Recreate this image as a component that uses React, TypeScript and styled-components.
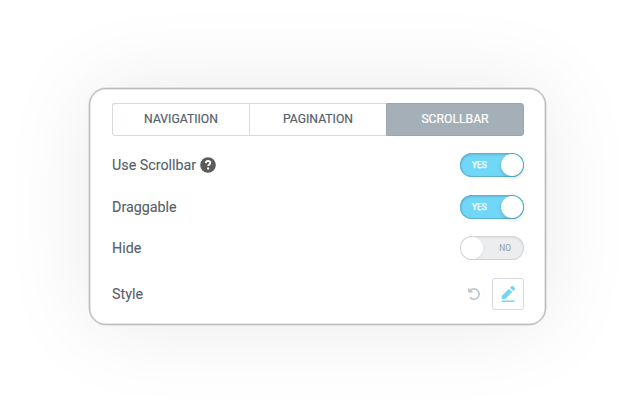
import React from "react";
import styled, { createGlobalStyle } from "styled-components";

const GlobalStyle = createGlobalStyle`
  * { box-sizing: border-box; }
  body { margin: 0; background: #fff; overflow: hidden; }
  button { font: inherit; margin: 0; padding: 0; }
`;

const Page = styled.main`
  height: 413px;
  padding: 88px 88px 0 89px;
  font-family: Roboto, "Liberation Sans", sans-serif;
  color: #556068;
`;

const Card = styled.section`
  width: 457px;
  height: 237px;
  padding: 14px 21px 0 22px;
  border: 1px solid #bcbcbc;
  border-radius: 17px;
  background: #fff;
  box-shadow: inset 0 0 0 0.5px #d0d0d0, 0 0 0 0.5px #d0d0d0, 0 0 90px rgba(0, 0, 0, 0.085);
`;

const Tabs = styled.div`
  display: grid;
  grid-template-columns: 137px 137px 138px;
  height: 33px;
  margin-bottom: 8px;
`;

const Tab = styled.button<{ $active?: boolean }>`
  border: 1px solid ${(p) => (p.$active ? "#9ba7b0" : "#d5dae2")};
  border-right-width: ${(p) => (p.$active ? "1px" : "0")};
  padding-bottom: 1px;
  background: ${(p) => (p.$active ? "#a4afb7" : "#fff")};
  color: ${(p) => (p.$active ? "#fff" : "#556068")};
  font-size: 12.2px;
  font-weight: 400;
  -webkit-text-stroke: 0.2px currentColor;
  line-height: 30px;
  &:first-child { border-radius: 3px 0 0 3px; }
  &:last-child { border-radius: 0 3px 3px 0; }
`;

const Row = styled.div<{ $height: number }>`
  display: flex;
  align-items: center;
  justify-content: space-between;
  width: 412px;
  height: ${(p) => p.$height}px;
`;

const Label = styled.span`
  display: flex;
  align-items: center;
  gap: 4px;
  font-size: 14.3px;
  line-height: 20px;
  -webkit-text-stroke: 0.1px currentColor;
`;

const Help = styled.svg`
  width: 16px;
  height: 16px;
`;

const Track = styled.button<{ $on: boolean }>`
  display: flex;
  flex-direction: ${(p) => (p.$on ? "row" : "row-reverse")};
  align-items: center;
  justify-content: space-between;
  width: 64px;
  height: 24px;
  padding: 1px;
  padding-left: ${(p) => (p.$on ? "12px" : "1px")};
  padding-right: ${(p) => (p.$on ? "1px" : "13px")};
  border: 0;
  border-radius: 12px;
  background: ${(p) => (p.$on ? "#71d7f7" : "#ebedee")};
  box-shadow: inset 0 0 0 1px ${(p) => (p.$on ? "#58b4d0" : "#d3d4d5")},
    inset 0 1px 3px rgba(0, 0, 0, ${(p) => (p.$on ? 0.25 : 0.12)});
  color: ${(p) => (p.$on ? "#fff" : "#9aa5ad")};
  font-size: 8.4px;
  font-weight: 400;
  -webkit-text-stroke: ${(p) => (p.$on ? "0.25px" : "0.1px")} currentColor;
`;

const Knob = styled.span<{ $on: boolean }>`
  width: 22px;
  height: 22px;
  border-radius: 50%;
  background: #fff;
  box-shadow: ${(p) => (p.$on ? "0 2px 5px rgba(0,0,0,.16)" : "1px 1px 2px rgba(0,0,0,.04)")};
`;

const Actions = styled.div`
  display: flex;
  align-items: center;
  gap: 11px;
`;

const Reset = styled.svg`
  width: 14px;
  height: 14px;
`;

const Edit = styled.button`
  display: grid;
  place-items: center;
  width: 32px;
  height: 32px;
  border: 1px solid #d5dae2;
  border-radius: 3px;
  background: #fff;
`;

const Pencil = styled.svg`
  display: block;
  width: 16px;
  height: 18px;
`;

function Toggle({ on, label }: { on: boolean; label: string }) {
  return (
    <Track $on={on} role="switch" aria-checked={on} aria-label={label}>
      <span>{on ? "YES" : "NO"}</span>
      <Knob $on={on} />
    </Track>
  );
}

export default function App() {
  return (
    <Page>
      <GlobalStyle />
      <Card>
        <Tabs>
          <Tab>NAVIGATIION</Tab>
          <Tab>PAGINATION</Tab>
          <Tab $active>SCROLLBAR</Tab>
        </Tabs>
        <Row $height={42}>
          <Label>
            Use Scrollbar
            <Help viewBox="0 0 16 16" fill="none">
              <circle cx="8" cy="8" r="7.8" fill="#5b5b5b" />
              <path d="M5.8 6.1C5.9 4.7 6.8 4 8 4c1.4 0 2.3.8 2.3 1.9 0 1.6-2.1 1.6-2.1 3.2" stroke="#fff" strokeWidth="1.8" />
              <circle cx="8.1" cy="11.5" r="1.15" fill="#fff" />
            </Help>
          </Label>
          <Toggle on label="Use Scrollbar" />
        </Row>
        <Row $height={41}>
          <Label>Draggable</Label>
          <Toggle on label="Draggable" />
        </Row>
        <Row $height={42}>
          <Label>Hide</Label>
          <Toggle on={false} label="Hide" />
        </Row>
        <Row $height={49}>
          <Label>Style</Label>
          <Actions>
            <Reset viewBox="0 0 14 14" fill="none" stroke="#bac4cd" strokeWidth="1.6">
              <path d="M2.3 4.2C3.4 2.7 5 1.9 7 1.9A5.2 5.2 0 1 1 2.8 10.2" />
              <path d="M1.9 1.2V4.6H5.5" />
            </Reset>
            <Edit aria-label="Edit style">
              <Pencil viewBox="0 0 16 18" fill="#71d7f7">
                <path d="M1.7 10.9 8.9 3.7 12.2 7 5 14.2H1.7Z" />
                <path d="m9.9 2.7 1.5-1.5q.9-.8 1.8 0l1.5 1.5q.9.9 0 1.8L13.2 6Z" />
                <path d="M1.5 15.5h13V17h-13Z" />
              </Pencil>
            </Edit>
          </Actions>
        </Row>
      </Card>
    </Page>
  );
}
